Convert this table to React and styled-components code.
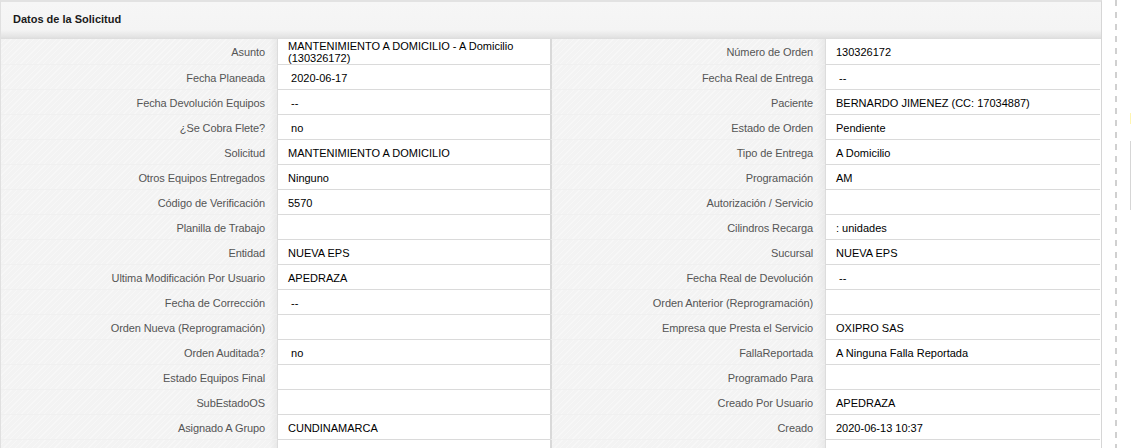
import React from 'react';
import styled, { createGlobalStyle } from 'styled-components';

const leftRows = [
  ['Asunto', 'MANTENIMIENTO A DOMICILIO - A Domicilio (130326172)'],
  ['Fecha Planeada', '\u00a02020-06-17'],
  ['Fecha Devolución Equipos', '\u00a0--'],
  ['¿Se Cobra Flete?', '\u00a0no'],
  ['Solicitud', 'MANTENIMIENTO A DOMICILIO'],
  ['Otros Equipos Entregados', 'Ninguno'],
  ['Código de Verificación', '5570'],
  ['Planilla de Trabajo', ''],
  ['Entidad', 'NUEVA EPS'],
  ['Ultima Modificación Por Usuario', 'APEDRAZA'],
  ['Fecha de Corrección', '\u00a0--'],
  ['Orden Nueva (Reprogramación)', ''],
  ['Orden Auditada?', '\u00a0no'],
  ['Estado Equipos Final', ''],
  ['SubEstadoOS', ''],
  ['Asignado A Grupo', 'CUNDINAMARCA'],
  ['', ''],
]

const rightRows = [
  ['Número de Orden', '130326172'],
  ['Fecha Real de Entrega', '\u00a0--'],
  ['Paciente', 'BERNARDO JIMENEZ (CC: 17034887)'],
  ['Estado de Orden', 'Pendiente'],
  ['Tipo de Entrega', 'A Domicilio'],
  ['Programación', 'AM'],
  ['Autorización / Servicio', ''],
  ['Cilindros Recarga', ': unidades'],
  ['Sucursal', 'NUEVA EPS'],
  ['Fecha Real de Devolución', '\u00a0--'],
  ['Orden Anterior (Reprogramación)', ''],
  ['Empresa que Presta el Servicio', 'OXIPRO SAS'],
  ['FallaReportada', 'A Ninguna Falla Reportada'],
  ['Programado Para', ''],
  ['Creado Por Usuario', 'APEDRAZA'],
  ['Creado', '2020-06-13 10:37'],
  ['', ''],
]

const App = () => {
  return(
    <Page>
      <GlobalStyle/>
      <Panel>
        <Header>Datos de la Solicitud</Header>
        <Table>
          {leftRows.map((l, i) => {
            const r = rightRows[i]
            return (
              <React.Fragment key={i}>
                <Label>{l[0]}</Label>
                <Value>{l[1]}</Value>
                <Label $second>{r[0]}</Label>
                <Value>{r[1]}</Value>
              </React.Fragment>
            )
          })}
        </Table>
      </Panel>
      <Dashed/>
      <Edge>
        <Mark/>
        <Rule/>
      </Edge>
    </Page>
  )
}

const GlobalStyle = createGlobalStyle`
  body {
    margin: 0;
    background: #fff;
    font-family: "Liberation Sans", Arial, sans-serif;
    overflow: hidden;
  }
`

const Page = styled.div`
  display: flex;
  height: 448px;
  overflow: hidden;
`

const Panel = styled.div`
  width: 1102px;
  flex-shrink: 0;
  border-top: 2px solid #e2e2e2;
  border-left: 1px solid #e0e0e0;
  border-right: 1px solid #d6d6d6;
  box-sizing: border-box;
`

const Header = styled.div`
  height: 37px;
  box-sizing: border-box;
  padding: 11px 0 0 12px;
  font-size: 11px;
  font-weight: bold;
  color: #1a1a1a;
  background: linear-gradient(to bottom, #f6f6f6 0, #f4f4f4 28px, #e3e3e3 35px, #dcdcdc 37px);
`

const Table = styled.div`
  display: grid;
  grid-template-columns: 276px 273px 275px 275px;
  grid-auto-rows: minmax(25px, auto);
`

const Label = styled.div`
  display: flex;
  align-items: center;
  justify-content: flex-end;
  padding: 1px 12px 0 0;
  font-size: 11px;
  letter-spacing: -0.1px;
  color: #555;
  border-bottom: 1px solid #f0f0f0;
  border-left: ${p => p.$second ? '2px solid #d9d9d9' : 'none'};
  background:
    linear-gradient(to right, rgba(255,255,255,0) 0, rgba(255,255,255,0) calc(100% - 8px), rgba(225,225,225,0.6) 100%),
    repeating-linear-gradient(135deg, #f3f3f3 0, #f3f3f3 3px, #f7f7f7 3px, #f7f7f7 4px);
`

const Value = styled.div`
  display: flex;
  align-items: center;
  padding: 1px 6px 0 10px;
  font-size: 11px;
  line-height: 12px;
  color: #000;
  background: #fff;
  border-left: 1px solid #dcdcdc;
  border-bottom: 1px solid #dadada;
  white-space: pre-wrap;
`

const Dashed = styled.div`
  width: 2px;
  margin-left: 13px;
  flex-shrink: 0;
  background: repeating-linear-gradient(to bottom, #d0d0d0 0, #d0d0d0 6px, transparent 6px, transparent 12px);
`

const Edge = styled.div`
  margin-left: 13px;
  display: flex;
  flex-direction: column;
`

const Mark = styled.div`
  margin-top: 113px;
  width: 1px;
  height: 11px;
  background: #fff5b0;
`

const Rule = styled.div`
  margin-top: 17px;
  width: 1px;
  height: 69px;
  background: #d6d6d6;
`

export default App
